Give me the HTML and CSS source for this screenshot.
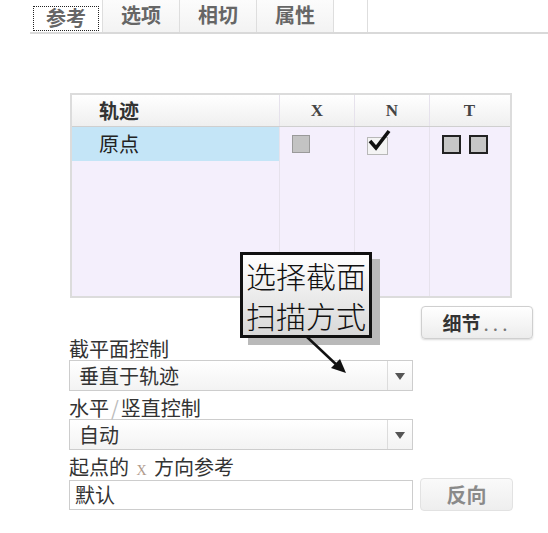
FILE: index.html
```html
<!DOCTYPE html>
<html lang="zh-CN">

<head>
  <meta charset="UTF-8">
  <title>扫描 - 参考</title>
  <link rel="stylesheet" href="styles.css">
</head>

<body>
  <div class="panel">
    <div class="tabs">
      <div class="tab tab-first"><span class="focus">参考</span></div>
      <div class="tab">选项</div>
      <div class="tab">相切</div>
      <div class="tab">属性</div>
      <div class="tab tab-empty"></div>
    </div>

    <div class="track">
      <div class="thead">
        <div class="cell cell-name">轨迹</div>
        <div class="cell cell-flag">X</div>
        <div class="cell cell-flag">N</div>
        <div class="cell cell-flag cell-last">T</div>
      </div>
      <div class="row">
        <div class="cell cell-name selected">原点</div>
        <div class="cell cell-flag"><span class="box box-gray"></span></div>
        <div class="cell cell-flag">
          <span class="box box-check">
            <svg class="tick" viewBox="0 0 24 22" width="24" height="22">
              <path d="M3 12 L9 19 L22 2" fill="none" stroke="#111" stroke-width="3.6" stroke-linejoin="miter" />
            </svg>
          </span>
        </div>
        <div class="cell cell-flag cell-last">
          <span class="box box-dark"></span>
          <span class="box box-dark"></span>
        </div>
      </div>
      <div class="fill">
        <div class="fill-col fill-name"></div>
        <div class="fill-col"></div>
        <div class="fill-col"></div>
        <div class="fill-col fill-last"></div>
      </div>
    </div>

    <div class="details-row">
      <button class="btn btn-details">细节<span class="dots">...</span></button>
    </div>

    <div class="form">
      <div class="label">截平面控制</div>
      <div class="select">
        <span class="select-text">垂直于轨迹</span>
        <span class="select-arrow"></span>
      </div>

      <div class="label label-gap">水平<span class="slash">/</span>竖直控制</div>
      <div class="select">
        <span class="select-text">自动</span>
        <span class="select-arrow"></span>
      </div>

      <div class="label label-gap">起点的 <span class="mono-x">X</span> 方向参考</div>
      <div class="field-row">
        <div class="field">默认</div>
        <button class="btn btn-flip">反向</button>
      </div>
    </div>

    <div class="callout">选择截面<br>扫描方式</div>
    <svg class="callout-arrow" width="48" height="44" viewBox="0 0 48 44">
      <line x1="3" y1="2" x2="36" y2="33" stroke="#111" stroke-width="2.5" />
      <path d="M42 38 L27 33 L36 24 Z" fill="#111" />
    </svg>
  </div>
</body>

</html>
```

FILE: styles.css
```css
body {
  margin: 0;
  background: #fff;
  font-family: "Noto Sans CJK SC", "Noto Sans", sans-serif;
  color: #222;
}

.panel {
  position: relative;
  width: 548px;
  height: 533px;
  overflow: hidden;
}

/* tabs */
.tabs {
  display: flex;
  margin-left: 30px;
  height: 32px;
  border-bottom: 2px solid #d9d9d9;
}

.tab {
  width: 76px;
  border-right: 1px solid #dedede;
  background: linear-gradient(to bottom, #fcfcfc, #f3f3f3);
  color: #666;
  font-size: 20px;
  font-weight: bold;
  line-height: 30px;
  text-align: center;
}

.tab-first {
  width: 73px;
  background: #fff;
  padding-top: 3px;
  box-sizing: border-box;
  text-align: left;
}

.focus {
  display: inline-block;
  margin-left: 3px;
  width: 64px;
  height: 23px;
  line-height: 22px;
  border: 1px dotted #222;
  text-align: center;
}

.tab-empty {
  width: 33px;
  background: #fff;
}

/* track table */
.track {
  margin: 59px 0 0 70px;
  width: 438px;
  height: 201px;
  border: 2px solid #dcdcdc;
  background: #f4effc;
  display: flex;
  flex-direction: column;
}

.thead,
.row,
.fill {
  display: flex;
}

.thead {
  height: 31px;
  border-bottom: 1px solid #cfcfcf;
  background: linear-gradient(to bottom, #ffffff, #efefef);
}

.row {
  height: 34px;
}

.fill {
  flex: 1;
}

.cell,
.fill-col {
  width: 75px;
  border-right: 1px solid #e6e2ec;
  box-sizing: border-box;
}

.cell-name,
.fill-name {
  width: 208px;
}

.cell-last,
.fill-last {
  width: 79px;
  border-right: none;
}

.thead .cell {
  line-height: 31px;
  font-size: 20px;
  font-weight: bold;
  color: #333;
}

.thead .cell-name {
  padding-left: 27px;
}

.thead .cell-flag {
  text-align: center;
  font-family: "Liberation Serif", serif;
  font-size: 17px;
  color: #444;
}

.row .cell-name {
  padding-left: 27px;
  font-size: 20px;
  line-height: 34px;
}

.selected {
  background: #c4e5f7;
}

.row .cell-flag {
  display: flex;
  align-items: center;
  gap: 8px;
  padding-left: 12px;
}

.box {
  display: inline-block;
  box-sizing: border-box;
}

.box-gray {
  width: 18px;
  height: 18px;
  background: #c3c3c3;
  border: 1px solid #9a9a9a;
}

.box-check {
  position: relative;
  width: 21px;
  height: 18px;
  margin-top: 4px;
  background: #f4f4f4;
  border: 1px solid #b8b8b8;
}

.tick {
  position: absolute;
  left: -1px;
  top: -9px;
}

.box-dark {
  width: 19px;
  height: 19px;
  background: #c6c6c6;
  border: 2px solid #222;
}

/* details button */
.details-row {
  display: flex;
  justify-content: flex-end;
  padding: 8px 15px 0 0;
}

.btn {
  font-family: "Noto Sans CJK SC", sans-serif;
  border-radius: 4px;
  cursor: pointer;
}

.btn-details {
  width: 112px;
  height: 33px;
  padding: 0;
  border: 1px solid #cfcfcf;
  background: linear-gradient(to bottom, #ffffff, #ececec);
  box-shadow: 0 1px 2px rgba(0, 0, 0, 0.15);
  color: #333;
  font-size: 19px;
  font-weight: bold;
}

.dots {
  font-weight: normal;
  color: #777;
  letter-spacing: 4px;
  margin-left: 3px;
}

/* form */
.form {
  padding-left: 69px;
  margin-top: -1px;
}

.label {
  height: 22px;
  font-size: 20px;
  line-height: 22px;
  color: #333;
}

.label-gap {
  margin-top: 6px;
}

.slash {
  color: #bbb;
  margin: 0 2px;
}

.mono-x {
  font-family: "Liberation Serif", serif;
  font-size: 14px;
  color: #b09a8c;
  margin: 0 3px;
}

.select {
  display: flex;
  width: 344px;
  height: 31px;
  box-sizing: border-box;
  border: 1px solid #cdcdcd;
  background: linear-gradient(to bottom, #ffffff, #f3f3f3);
}

.select-text {
  flex: 1;
  padding-left: 9px;
  font-size: 20px;
  line-height: 29px;
  color: #333;
}

.select-arrow {
  width: 24px;
  border-left: 1px solid #dcdcdc;
  position: relative;
}

.select-arrow::after {
  content: "";
  position: absolute;
  left: 7px;
  top: 12px;
  border-left: 5px solid transparent;
  border-right: 5px solid transparent;
  border-top: 7px solid #555;
}

.field-row {
  display: flex;
  align-items: center;
  gap: 7px;
}

.field {
  width: 344px;
  height: 30px;
  box-sizing: border-box;
  border: 1px solid #cdcdcd;
  padding-left: 5px;
  font-size: 20px;
  line-height: 28px;
  color: #333;
}

.btn-flip {
  width: 93px;
  height: 33px;
  padding: 0;
  border: 1px solid #e2e2e2;
  background: linear-gradient(to bottom, #fafafa, #eeeeee);
  color: #8a8a8a;
  font-size: 20px;
  font-weight: bold;
}

/* annotation */
.callout {
  position: absolute;
  left: 240px;
  top: 252px;
  width: 123px;
  height: 80px;
  padding: 0 0 0 3px;
  border: 3px solid #111;
  background: linear-gradient(to bottom, #ffffff, #d8d8d8);
  box-shadow: 8px 7px 0 #b9b9b9;
  font-size: 30px;
  font-weight: 300;
  line-height: 40px;
  color: #111;
}

.callout-arrow {
  position: absolute;
  left: 304px;
  top: 335px;
}
```
